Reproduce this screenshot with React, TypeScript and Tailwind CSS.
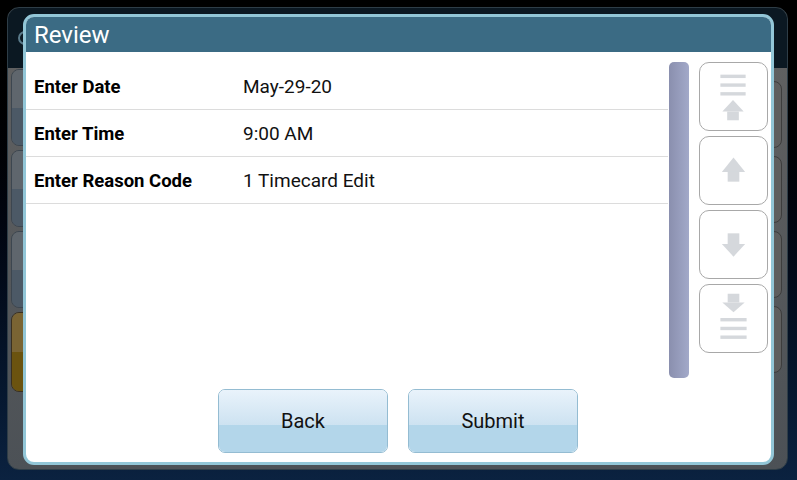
import React from "react";

const font = { fontFamily: "Roboto, 'Noto Sans', Arial, sans-serif" };

function LeftBtn({ yellow, h }: { yellow?: boolean; h: string }) {
  return (
    <div
      className={`${h} w-[40px] rounded-[8px] border overflow-hidden flex flex-col ${
        yellow ? "border-[#3a3020]" : "border-[#3c4650]"
      }`}
    >
      <div className={`flex-1 ${yellow ? "bg-[#7a6433]" : "bg-[#5f666d]"}`} />
      <div className={`flex-1 ${yellow ? "bg-[#6b530f]" : "bg-[#4c5966]"}`} />
    </div>
  );
}

function RightBtn() {
  return <div className="h-[67px] w-[40px] rounded-[8px] border border-[#3d3d3d] bg-[#5e5e5e]" />;
}

function ScrollBtn({ children }: { children: React.ReactNode }) {
  return (
    <div className="h-[69px] w-[69px] rounded-[10px] border border-[#a8a8a8] bg-white flex items-center justify-center">
      <svg width="69" height="69" viewBox="0 0 69 69">
        <g fill="#d5d8dc">{children}</g>
      </svg>
    </div>
  );
}

const rows = [
  ["Enter Date", "May-29-20"],
  ["Enter Time", "9:00 AM"],
  ["Enter Reason Code", "1 Timecard Edit"],
];

export default function App() {
  return (
    <div
      className="relative w-[797px] h-[480px] overflow-hidden bg-gradient-to-b from-[#000000] to-[#0b2240] pt-[7px] pl-[7px] pr-[9px] pb-[10px]"
      style={font}
    >
      {/* background app frame */}
      <div className="h-full w-full rounded-[12px] border border-[#2e3d47] overflow-hidden flex flex-col bg-gradient-to-b from-[#626262] to-[#4c5156]">
        <div className="h-[60px] bg-[#0b1822] flex items-center pl-[10px]">
          <div className="w-[14px] h-[14px] rounded-full border-2 border-[#5a7a8a]" />
        </div>
        <div className="flex-1 flex justify-between">
          <div className="flex flex-col gap-[4px] pl-[3px] pt-[1px]">
            <LeftBtn h="h-[77px]" />
            <LeftBtn h="h-[77px]" />
            <LeftBtn h="h-[77px]" />
            <LeftBtn h="h-[80px]" yellow />
          </div>
          <div className="flex flex-col gap-[8px] pr-[5px] pt-[13px]">
            <RightBtn />
            <RightBtn />
            <RightBtn />
            <RightBtn />
          </div>
        </div>
      </div>

      {/* dialog overlay */}
      <div className="absolute left-[23px] top-[14px] w-[751px] h-[451px] rounded-[11px] border-[3px] border-[#92c6d7] bg-white overflow-hidden flex flex-col">
        <div className="h-[35px] bg-[#3b6b84] flex items-center pl-[8px] shrink-0">
          <span className="text-white text-[24px] leading-none">Review</span>
        </div>
        <div className="flex flex-1">
          <div className="flex-1 flex flex-col">
            <div className="h-[334px] pt-[11px]">
              {rows.map(([k, v]) => (
                <div key={k} className="h-[47px] pt-[3px] border-b border-[#dcdcdc] flex items-center">
                  <div className="w-[217px] pl-[8px] text-[18.5px] font-bold text-black">{k}</div>
                  <div className="text-[19px] text-[#111]">{v}</div>
                </div>
              ))}
            </div>
            <div className="flex-1 flex justify-center gap-[20px] pl-[102px] pt-[3px]">
              {["Back", "Submit"].map((t) => (
                <div
                  key={t}
                  className="w-[170px] h-[64px] rounded-[7px] border border-[#94bcd2] overflow-hidden flex flex-col relative"
                >
                  <div className="h-[35px] bg-gradient-to-b from-[#e9f3fb] to-[#cde2f1]" />
                  <div className="flex-1 bg-[#b3d6ea]" />
                  <div className="absolute inset-0 flex items-center justify-center text-[20px] text-[#111]">
                    {t}
                  </div>
                </div>
              ))}
            </div>
          </div>
          <div className="w-[20px] h-[316px] mt-[10px] ml-[1px] rounded-[5px] bg-gradient-to-r from-[#8a8fae] to-[#a2a9c9]" />
          <div className="flex flex-col gap-[5px] pt-[10px] pl-[10px] pr-[3px]">
            <ScrollBtn>
              <rect x="21" y="12" width="26" height="3.5" />
              <rect x="21" y="21" width="26" height="3.5" />
              <rect x="21" y="30" width="26" height="3.5" />
              <polygon points="34,38 23,50 45,50" />
              <rect x="28" y="50" width="12" height="9" />
            </ScrollBtn>
            <ScrollBtn>
              <polygon points="34.5,21 22.5,36 46.5,36" />
              <rect x="28.5" y="36" width="12" height="10" />
            </ScrollBtn>
            <ScrollBtn>
              <rect x="28.5" y="23" width="12" height="11" />
              <polygon points="22.5,34 46.5,34 34.5,47" />
            </ScrollBtn>
            <ScrollBtn>
              <rect x="28.5" y="9" width="12" height="9" />
              <polygon points="23,18 46,18 34.5,28" />
              <rect x="21" y="34" width="27" height="3.5" />
              <rect x="21" y="43" width="27" height="3.5" />
              <rect x="21" y="52" width="27" height="3.5" />
            </ScrollBtn>
          </div>
        </div>
      </div>
    </div>
  );
}
